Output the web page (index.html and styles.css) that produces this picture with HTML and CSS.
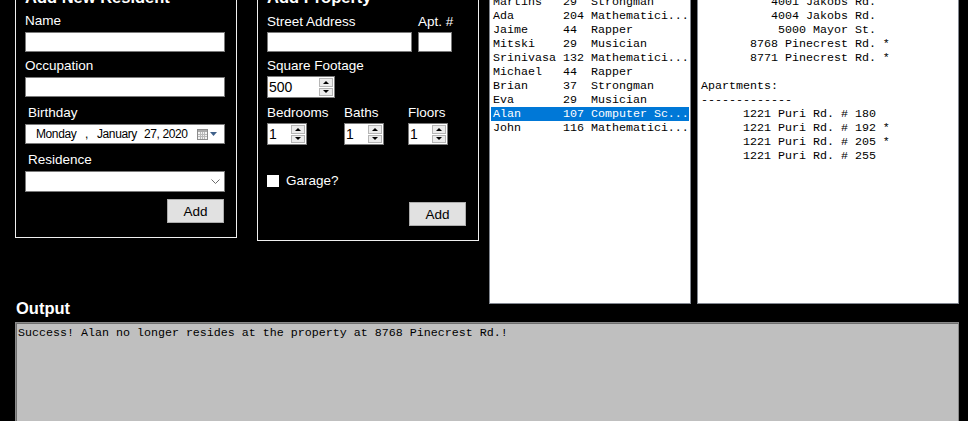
FILE: index.html
```html
<!DOCTYPE html>
<html lang="en">
<head>
    <meta charset="UTF-8">
    <title>Residents and Properties</title>
    <link rel="stylesheet" href="styles.css">
</head>
<body>
    <div class="app">
        <div class="top">
            <div class="group resident">
                <div class="group-title">Add New Resident</div>
                <div class="field first">
                    <div class="label">Name</div>
                    <input class="textbox full" type="text">
                </div>
                <div class="field">
                    <div class="label">Occupation</div>
                    <input class="textbox full" type="text">
                </div>
                <div class="field spaced">
                    <div class="label indent">Birthday</div>
                    <div class="datepicker">
                        <span class="dow">Monday</span>
                        <span class="comma">,</span>
                        <span class="month">January</span>
                        <span class="dayyear">27, 2020</span>
                        <span class="cal">
                            <svg width="11" height="11" viewBox="0 0 11 11">
                                <rect x="0.5" y="0.5" width="10" height="10" fill="#f2f2f2" stroke="#8c8c8c"/>
                                <rect x="1" y="1" width="9" height="2" fill="#a9a9a9"/>
                                <path d="M1 5.5h9M1 7.5h9M3.5 3v7M5.5 3v7M7.5 3v7" stroke="#b8b8b8" stroke-width="1"/>
                            </svg>
                            <svg width="7" height="4" viewBox="0 0 7 4">
                                <path d="M0 0h7L3.5 4z" fill="#40618a"/>
                            </svg>
                        </span>
                    </div>
                </div>
                <div class="field spaced">
                    <div class="label indent">Residence</div>
                    <div class="combo">
                        <svg width="9" height="5" viewBox="0 0 9 5">
                            <polyline points="0.5,0.5 4.5,4.5 8.5,0.5" fill="none" stroke="#6b6b6b"/>
                        </svg>
                    </div>
                </div>
                <div class="actions">
                    <button class="btn">Add</button>
                </div>
            </div>

            <div class="group property">
                <div class="group-title">Add Property</div>
                <div class="row street-row">
                    <div class="field">
                        <div class="label">Street Address</div>
                        <input class="textbox street" type="text">
                    </div>
                    <div class="field">
                        <div class="label">Apt. #</div>
                        <input class="textbox apt" type="text">
                    </div>
                </div>
                <div class="field">
                    <div class="label">Square Footage</div>
                    <div class="numeric sqft">
                        <span class="value">500</span>
                        <span class="spin"><span class="up"></span><span class="down"></span></span>
                    </div>
                </div>
                <div class="rooms">
                    <div class="field">
                        <div class="label">Bedrooms</div>
                        <div class="numeric small">
                            <span class="value">1</span>
                            <span class="spin"><span class="up"></span><span class="down"></span></span>
                        </div>
                    </div>
                    <div class="field">
                        <div class="label">Baths</div>
                        <div class="numeric small">
                            <span class="value">1</span>
                            <span class="spin"><span class="up"></span><span class="down"></span></span>
                        </div>
                    </div>
                    <div class="field">
                        <div class="label">Floors</div>
                        <div class="numeric small">
                            <span class="value">1</span>
                            <span class="spin"><span class="up"></span><span class="down"></span></span>
                        </div>
                    </div>
                </div>
                <label class="checkrow">
                    <span class="check"></span>
                    <span class="label">Garage?</span>
                </label>
                <div class="actions">
                    <button class="btn">Add</button>
                </div>
            </div>

            <div class="listbox residents">
                <div class="item">Martins   29  Strongman</div>
                <div class="item">Ada       204 Mathematici...</div>
                <div class="item">Jaime     44  Rapper</div>
                <div class="item">Mitski    29  Musician</div>
                <div class="item">Srinivasa 132 Mathematici...</div>
                <div class="item">Michael   44  Rapper</div>
                <div class="item">Brian     37  Strongman</div>
                <div class="item">Eva       29  Musician</div>
                <div class="item selected">Alan      107 Computer Sc...</div>
                <div class="item">John      116 Mathematici...</div>
            </div>

            <div class="listbox properties">
                <div class="item">          4001 Jakobs Rd.</div>
                <div class="item">          4004 Jakobs Rd.</div>
                <div class="item">           5000 Mayor St.</div>
                <div class="item">       8768 Pinecrest Rd. *</div>
                <div class="item">       8771 Pinecrest Rd. *</div>
                <div class="item"> </div>
                <div class="item">Apartments:</div>
                <div class="item">-------------</div>
                <div class="item">      1221 Puri Rd. # 180</div>
                <div class="item">      1221 Puri Rd. # 192 *</div>
                <div class="item">      1221 Puri Rd. # 205 *</div>
                <div class="item">      1221 Puri Rd. # 255</div>
            </div>
        </div>

        <div class="output-title">Output</div>
        <div class="output">Success! Alan no longer resides at the property at 8768 Pinecrest Rd.!</div>
    </div>
</body>
</html>
```

FILE: styles.css
```css
body {
    margin: 0;
    background-color: #000;
    color: #fff;
    font-family: "Liberation Sans", Arial, sans-serif;
    overflow: hidden;
}

.app {
    padding-left: 15px;
}

.top {
    display: flex;
    align-items: flex-start;
    margin-top: -8px;
}

/* group boxes */

.group {
    box-sizing: border-box;
    width: 222px;
    margin-top: 2px;
    border: 1px solid #f0f0f0;
    padding: 0 11px 14px 9px;
}

.group.property {
    margin-left: 20px;
    padding-right: 12px;
}

.group-title {
    display: block;
    width: max-content;
    margin-top: -8px;
    padding-right: 2px;
    background-color: #000;
    font-size: 16.5px;
    font-weight: bold;
    line-height: 20px;
}

.label {
    font-size: 13.5px;
    line-height: 17px;
    margin-bottom: 3px;
}

.label.indent {
    padding-left: 3px;
}

.field {
    margin-top: 5px;
}

.field.first {
    margin-top: 5px;
}

.field.spaced {
    margin-top: 7px;
}

.textbox {
    display: block;
    box-sizing: border-box;
    height: 20px;
    margin: 0;
    border: 1px solid #7a7a7a;
    background-color: #fff;
    padding: 0 2px;
}

.textbox.full {
    width: 200px;
}

.datepicker,
.combo {
    box-sizing: border-box;
    width: 200px;
    height: 20px;
    border: 1px solid #7a7a7a;
    background-color: #fff;
    display: flex;
    align-items: center;
}

.datepicker {
    padding: 0 7px 0 10px;
    color: #000;
    font-size: 12px;
    letter-spacing: -0.4px;
    line-height: 18px;
}

.datepicker .dow {
    width: 49px;
}

.datepicker .comma {
    width: 12px;
}

.datepicker .month {
    width: 47px;
}

.datepicker .cal {
    margin-left: auto;
    display: flex;
    align-items: center;
    gap: 2px;
}

.combo {
    height: 21px;
    justify-content: flex-end;
    padding-right: 4px;
}

.actions {
    display: flex;
    justify-content: flex-end;
    margin-top: 7px;
    padding-right: 1px;
}

.property .actions {
    margin-top: 13px;
    padding-right: 0;
}

.btn {
    display: block;
    width: 57px;
    height: 24px;
    margin: 0;
    padding: 0;
    border: 1px solid #adadad;
    background-color: #e1e1e1;
    color: #000;
    font-family: "Liberation Sans", Arial, sans-serif;
    font-size: 13.5px;
}

/* property box */

.property .label {
    margin-bottom: 2px;
}

.street-row {
    display: flex;
    gap: 6px;
}

.street-row .field {
    margin-top: 6px;
}

.textbox.street {
    width: 145px;
}

.textbox.apt {
    width: 34px;
}

.numeric {
    box-sizing: border-box;
    height: 22px;
    border: 1px solid #7a7a7a;
    background-color: #fff;
    display: flex;
}

.numeric.sqft {
    width: 68px;
}

.numeric.small {
    width: 40px;
}

.numeric .value {
    flex: 1;
    padding-left: 1px;
    color: #000;
    font-size: 14px;
    line-height: 20px;
}

.spin {
    display: flex;
    flex-direction: column;
    gap: 1px;
    width: 14px;
    padding: 1px 1px 1px 0;
}

.spin span {
    flex: 1;
    border: 1px solid #b5b5b5;
    background-color: #ececec;
    display: flex;
    align-items: center;
    justify-content: center;
}

.spin .up::after,
.spin .down::after {
    content: "";
    border-left: 3px solid transparent;
    border-right: 3px solid transparent;
}

.spin .up::after {
    border-bottom: 3px solid #000;
}

.spin .down::after {
    border-top: 3px solid #000;
}

.rooms {
    display: grid;
    grid-template-columns: 77px 64px auto;
    margin-top: 6px;
}

.rooms .field {
    margin-top: 0;
}

.checkrow {
    display: flex;
    align-items: center;
    gap: 7px;
    margin-top: 27px;
}

.checkrow .label {
    margin-bottom: 0;
}

.check {
    width: 12px;
    height: 12px;
    background-color: #fff;
}

/* list boxes */

.listbox {
    box-sizing: border-box;
    height: 312px;
    border: 1px solid #828790;
    background-color: #fff;
    padding: 2px 1px 1px;
    overflow: hidden;
    color: #000;
    font-family: "Liberation Mono", "Courier New", monospace;
    font-size: 11.67px;
    line-height: 14px;
}

.listbox.residents {
    width: 202px;
    margin-left: 10px;
}

.listbox.properties {
    width: 262px;
    margin-left: 6px;
}

.item {
    height: 14px;
    padding-left: 2px;
    white-space: pre;
}

.item.selected {
    background-color: #0078d7;
    color: #fff;
}

/* output */

.output-title {
    margin: -6px 0 0 1px;
    font-size: 16.5px;
    font-weight: bold;
    line-height: 20px;
}

.output {
    box-sizing: border-box;
    width: 944px;
    height: 130px;
    margin-top: 4px;
    border: 1px solid #8a8a8a;
    box-shadow: inset 1px 1px 0 #6e6e6e;
    background-color: #bfbfbf;
    padding: 3px 2px;
    color: #000;
    font-family: "Liberation Mono", "Courier New", monospace;
    font-size: 11.67px;
    line-height: 14px;
    white-space: pre;
}
```
